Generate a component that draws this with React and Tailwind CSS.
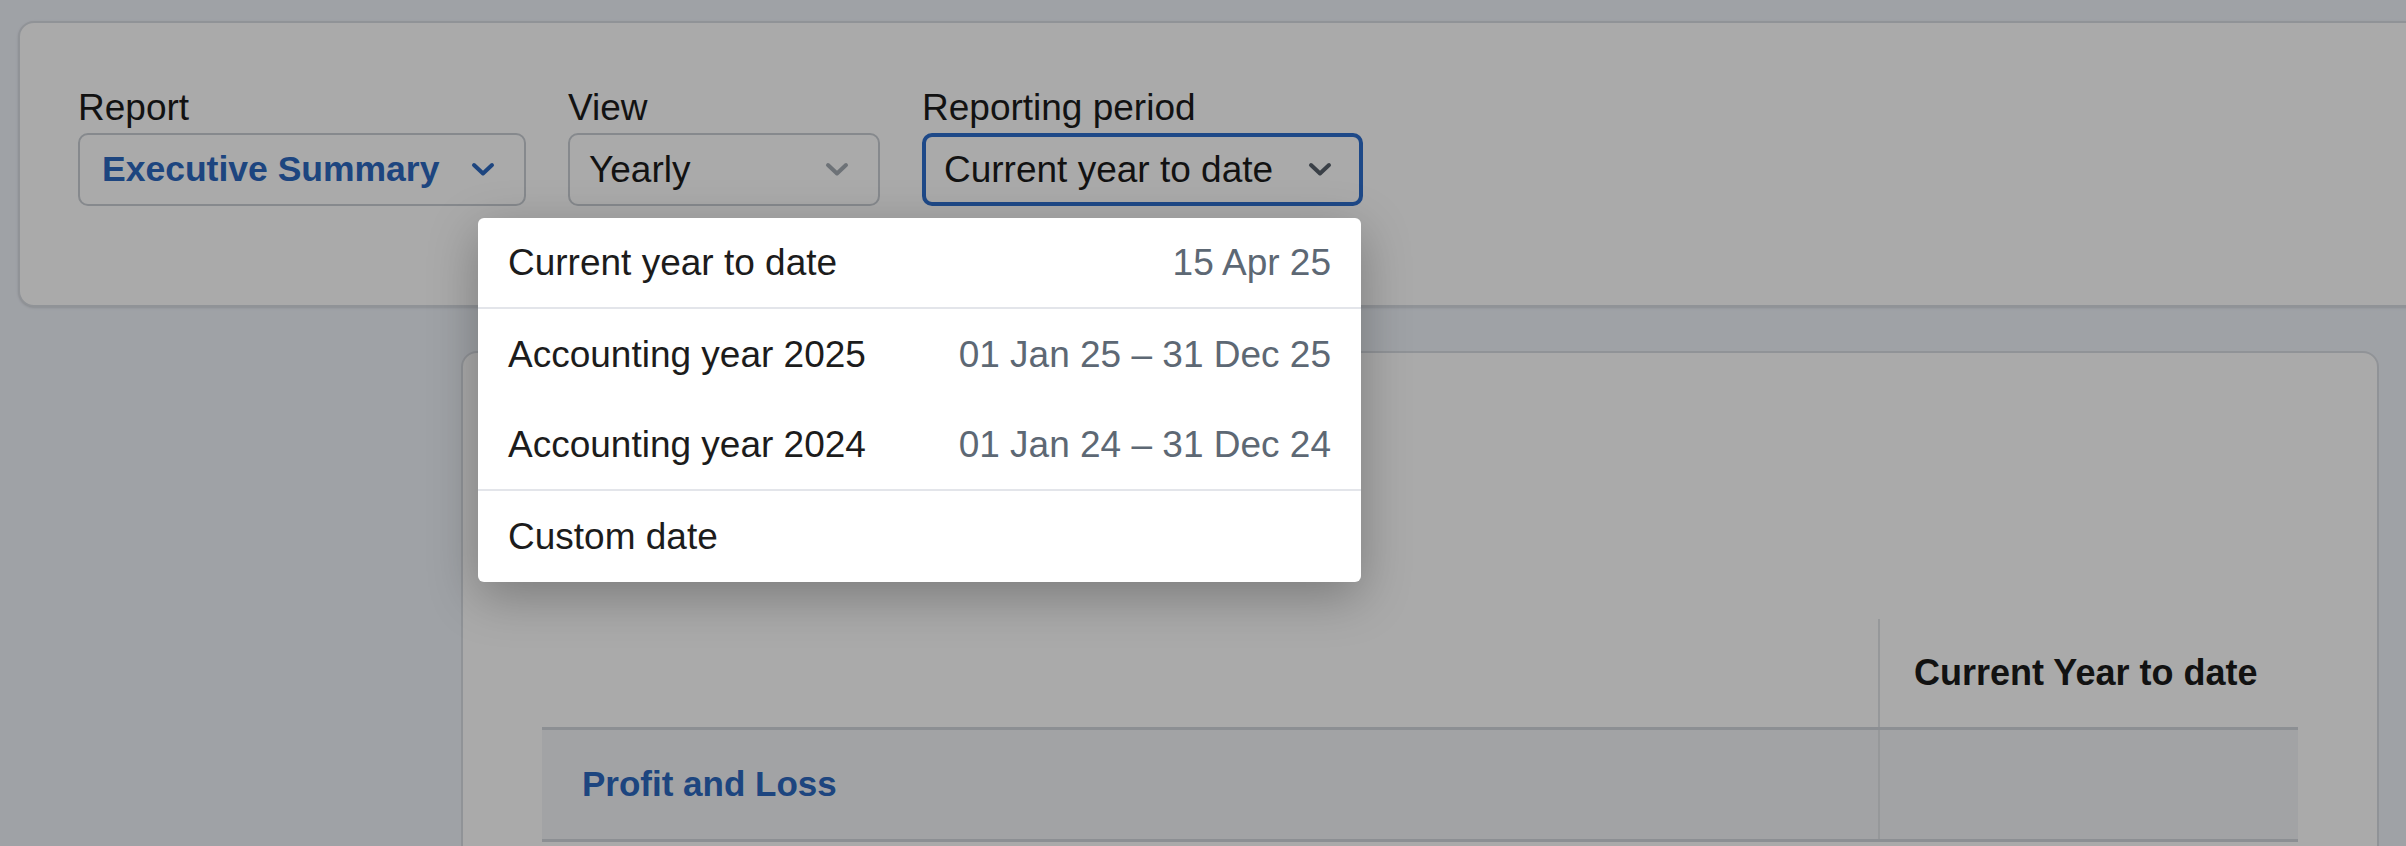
import React from 'react';

function Chevron({ color }) {
  return (
    <svg width="24" height="15" viewBox="0 0 24 15" fill="none">
      <path d="M3 3 L12 11.5 L21 3" stroke={color} strokeWidth="4" strokeLinecap="round" strokeLinejoin="round" />
    </svg>
  );
}

const periods = [
  { label: 'Current year to date', range: '15 Apr 25', divider: true },
  { label: 'Accounting year 2025', range: '01 Jan 25 – 31 Dec 25' },
  { label: 'Accounting year 2024', range: '01 Jan 24 – 31 Dec 24', divider: true },
  { label: 'Custom date', range: '' },
];

function PeriodMenu() {
  return (
    <div className="absolute right-[2px] top-[85px] z-20 w-[883px] overflow-hidden rounded-[6px] bg-white shadow-[0_14px_50px_rgba(0,0,0,0.28)]">
      {periods.map((p) => (
        <div
          key={p.label}
          className={`flex h-[91px] items-center justify-between px-[30px] ${p.divider ? 'border-b-2 border-[#e3e5ea]' : ''}`}
        >
          <span className="text-[37px] text-[#1c1c1c]">{p.label}</span>
          <span className="text-[37px] text-[#5d6874]">{p.range}</span>
        </div>
      ))}
    </div>
  );
}

export default function App() {
  return (
    <div
      className="relative h-[846px] w-[2406px] overflow-hidden bg-[#eff3fa] pt-[21px]"
      style={{ fontFamily: '"Liberation Sans", Arial, sans-serif' }}
    >
      {/* filters card */}
      <div className="ml-[18px] mr-[-40px] h-[286px] rounded-[16px] border-2 border-[#d9dde3] bg-white pl-[58px] pt-[63px] shadow-sm">
        <div className="flex gap-[42px]">
          <div className="flex flex-col">
            <label className="text-[37px] leading-[44px] text-[#1c1c1c]">Report</label>
            <div className="mt-[3px] flex h-[73px] w-[448px] items-center justify-between rounded-[10px] border-2 border-[#c9ced4] pl-[22px] pr-[29px]">
              <span className="text-[35.5px] font-bold text-[#2c68bf]">Executive Summary</span>
              <Chevron color="#2c68bf" />
            </div>
          </div>
          <div className="flex flex-col">
            <label className="text-[37px] leading-[44px] text-[#1c1c1c]">View</label>
            <div className="mt-[3px] flex h-[73px] w-[312px] items-center justify-between rounded-[10px] border-2 border-[#c9ced4] pl-[19px] pr-[29px]">
              <span className="text-[37px] text-[#1c1c1c]">Yearly</span>
              <Chevron color="#a4abb3" />
            </div>
          </div>
          <div className="flex flex-col">
            <label className="text-[37px] leading-[44px] text-[#1c1c1c]">Reporting period</label>
            <div className="relative mt-[3px]">
              <div className="flex h-[73px] w-[441px] items-center justify-between rounded-[10px] border-4 border-[#2e6ecd] pl-[18px] pr-[27px]">
                <span className="text-[37px] text-[#1c1c1c]">Current year to date</span>
                <Chevron color="#58606b" />
              </div>
              <PeriodMenu />
            </div>
          </div>
        </div>
      </div>

      {/* report card */}
      <div className="ml-[461px] mt-[44px] h-[600px] w-[1918px] rounded-[16px] border-2 border-[#d9dde3] bg-white pl-[79px] pt-[266px]">
        <div className="w-[1756px]">
          <div className="grid h-[111px] grid-cols-[1336px_420px] border-b-[3px] border-[#d3d7dd]">
            <div />
            <div className="flex items-center border-l-2 border-[#e1e4e8] pl-[34px]">
              <span className="text-[36px] font-bold text-[#1c1c1c]">Current Year to date</span>
            </div>
          </div>
          <div className="grid h-[112px] grid-cols-[1336px_420px] border-b-[3px] border-[#d3d7dd] bg-[#f4f5f8]">
            <div className="flex items-center pl-[40px]">
              <span className="text-[35px] font-bold text-[#2c68bf]">Profit and Loss</span>
            </div>
            <div className="border-l-2 border-[#e1e4e8]" />
          </div>
        </div>
      </div>

      {/* dim overlay behind the open menu */}
      <div className="absolute inset-0 z-10 bg-black/[0.335]" />
    </div>
  );
}
